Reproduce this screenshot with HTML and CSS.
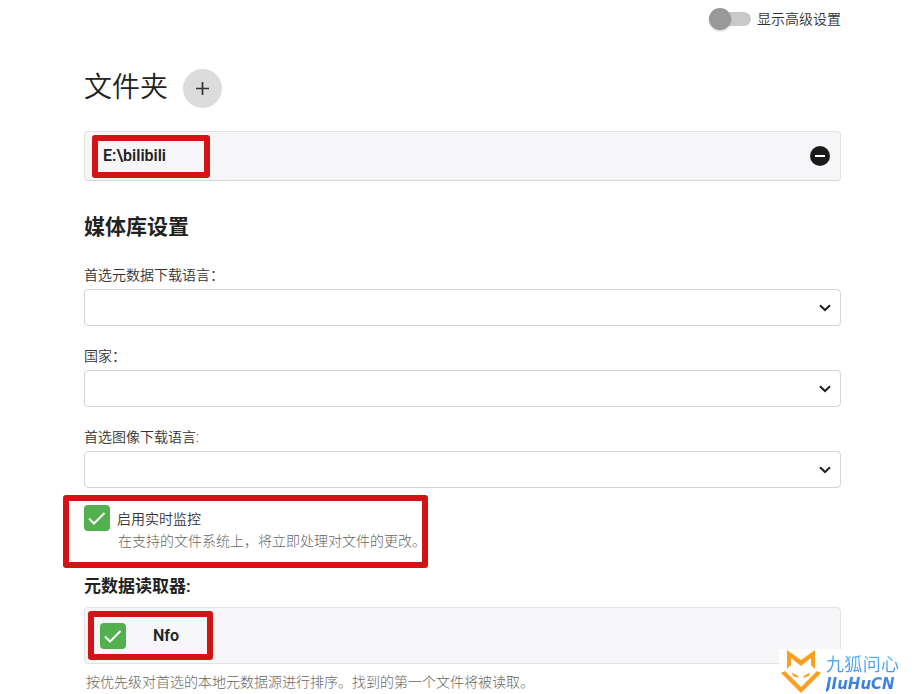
FILE: index.html
```
<!DOCTYPE html>
<html lang="zh-CN">
<head>
    <meta charset="UTF-8">
    <meta name="viewport" content="width=device-width, initial-scale=1.0">
    <title>媒体库设置</title>
    <link rel="stylesheet" href="styles.css">
</head>
<body>
    <form class="library-form">
        <label class="toggle">
            <input type="checkbox" class="toggle-input">
            <span class="toggle-track"></span>
            <span class="toggle-label">显示高级设置</span>
        </label>

        <div class="folder-header">
            <h1 class="folder-title">文件夹</h1>
            <button type="button" class="add-button" aria-label="+">
                <svg width="13" height="13" viewBox="0 0 13 13"><path d="M6.500 0V13M0 6.500H13" stroke="#333" stroke-width="1.700"/></svg>
            </button>
        </div>
        <div class="list-item folder-item">
            <span class="item-name">E:\bilibili</span>
            <button type="button" class="remove-button" aria-label="-">
                <svg width="20" height="20" viewBox="0 0 20 20"><circle cx="10" cy="10" r="10" fill="#1b1b1c"/><path d="M5 10H15" stroke="#fff" stroke-width="2"/></svg>
            </button>
            <span class="mark mark-folder"></span>
        </div>

        <h2 class="section-title">媒体库设置</h2>
        <div class="fields">
            <div class="field">
                <label for="language">首选元数据下载语言：</label>
                <div class="select-wrap">
                    <select id="language"><option></option></select>
                    <svg class="chevron" width="12" height="8" viewBox="0 0 12 8"><path d="M1 1.200L6 6L11 1.200" fill="none" stroke="#222" stroke-width="2"/></svg>
                </div>
            </div>
            <div class="field">
                <label for="country">国家：</label>
                <div class="select-wrap">
                    <select id="country"><option></option></select>
                    <svg class="chevron" width="12" height="8" viewBox="0 0 12 8"><path d="M1 1.200L6 6L11 1.200" fill="none" stroke="#222" stroke-width="2"/></svg>
                </div>
            </div>
            <div class="field">
                <label for="image-language">首选图像下载语言:</label>
                <div class="select-wrap">
                    <select id="image-language"><option></option></select>
                    <svg class="chevron" width="12" height="8" viewBox="0 0 12 8"><path d="M1 1.200L6 6L11 1.200" fill="none" stroke="#222" stroke-width="2"/></svg>
                </div>
            </div>
        </div>

        <div class="monitor">
            <span class="check">
                <input type="checkbox" id="monitor" checked>
                <svg class="tick" width="26" height="26" viewBox="0 0 26 26"><path d="M5 13.500L10 18.500L20.500 8" fill="none" stroke="#fff" stroke-width="2"/></svg>
            </span>
            <div class="monitor-text">
                <label for="monitor">启用实时监控</label>
                <p class="hint">在支持的文件系统上，将立即处理对文件的更改。</p>
            </div>
            <span class="mark mark-monitor"></span>
        </div>

        <h3 class="reader-title">元数据读取器:</h3>
        <div class="list-item reader-item">
            <span class="check">
                <input type="checkbox" id="nfo" checked>
                <svg class="tick" width="26" height="26" viewBox="0 0 26 26"><path d="M5 13.500L10 18.500L20.500 8" fill="none" stroke="#fff" stroke-width="2"/></svg>
            </span>
            <label for="nfo" class="item-name">Nfo</label>
            <span class="mark mark-reader"></span>
        </div>
        <p class="hint reader-hint">按优先级对首选的本地元数据源进行排序。找到的第一个文件将被读取。</p>
    </form>

    <div class="watermark">
        <svg width="40" height="44" viewBox="0 0 40 44">
            <g fill="#f9a01f">
                <path d="M6 1L20 11L34 1V20L30 16V9L20 17L10 9V16L6 20Z"/>
                <path d="M0 24L4 22L20 38L36 22L40 24L20 44Z"/>
                <path d="M11 23.500L18 27.500L16 28.500L12 27Z"/>
                <path d="M29 23.500L22 27.500L24 28.500L28 27Z"/>
            </g>
        </svg>
        <div class="watermark-text">
            <span class="watermark-name">
                <span>九</span><span>狐</span><span>问</span><span>心</span>
            </span>
            <span class="watermark-site">JIuHuCN</span>
        </div>
    </div>
</body>
</html>
```
FILE: styles.css
```
* {
    box-sizing: border-box;
}
body {
    margin: 0;
    background-color: #fff;
    color: #222;
    font-family: Roboto, "Noto Sans CJK SC", sans-serif;
    font-size: 14px;
    line-height: 20px;
}
h1, h2, h3, p {
    margin: 0;
}
button {
    border: 0;
    padding: 0;
    display: flex;
    align-items: center;
    justify-content: center;
    background: none;
    cursor: pointer;
}
label {
    color: #333;
    font-weight: 350;
}
.library-form {
    padding: 8px 74px 0 84px;
}
.toggle {
    display: flex;
    align-items: center;
    justify-content: flex-end;
    position: relative;
    height: 22px;
}
.toggle-input {
    position: absolute;
    opacity: 0;
}
.toggle-track {
    position: relative;
    width: 39px;
    height: 14px;
    margin-right: 6px;
    border-radius: 7px;
    background-color: #c9c9c9;
}
.toggle-track::before {
    content: "";
    position: absolute;
    left: -3px;
    top: -4px;
    width: 22px;
    height: 22px;
    border-radius: 50%;
    background-color: #999;
    box-shadow: 0 1px 2px rgba(0, 0, 0, 0.2);
}
.folder-header {
    display: flex;
    align-items: center;
    gap: 15px;
    margin-top: 38px;
}
.folder-title {
    font-size: 28px;
    line-height: 40px;
    font-weight: 350;
}
.add-button {
    width: 39px;
    height: 39px;
    border-radius: 50%;
    background-color: #dcdcdc;
}
.list-item {
    position: relative;
    display: flex;
    align-items: center;
    border: 1px solid #e2e2e4;
    border-radius: 4px;
    background-color: #f6f6f8;
}
.folder-item {
    justify-content: space-between;
    height: 50px;
    margin-top: 23px;
    padding: 0 10px 0 18px;
    border-bottom-color: #d6d6d8;
}
.item-name {
    color: #222;
    font-size: 16px;
    font-weight: 600;
}
.section-title {
    margin: 30px 0 22px;
    font-size: 21px;
    line-height: 32px;
    font-weight: 600;
}
.fields {
    display: flex;
    flex-direction: column;
    gap: 20px;
    margin-bottom: 17px;
}
.field label {
    display: block;
    margin-bottom: 4px;
}
.select-wrap {
    position: relative;
}
.select-wrap select {
    display: block;
    width: 100%;
    height: 37px;
    padding: 0 30px 0 10px;
    border: 1px solid #d4d4d4;
    border-radius: 4px;
    background-color: #fff;
    appearance: none;
    font: inherit;
}
.chevron {
    position: absolute;
    right: 10px;
    top: 15px;
    pointer-events: none;
}
.monitor {
    position: relative;
    display: flex;
    gap: 7px;
}
.check {
    position: relative;
    flex: none;
    width: 26px;
    height: 26px;
}
.check input {
    display: block;
    width: 26px;
    height: 26px;
    margin: 0;
    border-radius: 4px;
    background-color: #52b04f;
    appearance: none;
}
.tick {
    position: absolute;
    left: 0;
    top: 0;
    pointer-events: none;
}
.monitor-text {
    padding-top: 4px;
}
.monitor-text label {
    display: block;
}
.hint {
    color: #666;
    font-weight: 300;
    padding: 2px 0 0 1px;
}
.reader-title {
    margin: 24px 0 10px;
    font-size: 17px;
    line-height: 22px;
    font-weight: 600;
}
.reader-item {
    gap: 27px;
    height: 57px;
    padding: 0 15px;
}
.reader-hint {
    padding: 8px 0 0 2px;
}
/* red highlight frames */
.mark {
    position: absolute;
    border: 6px solid #d21414;
    border-radius: 3px;
    pointer-events: none;
}
.mark-folder {
    left: 7px;
    top: 3px;
    width: 118px;
    height: 43px;
}
.mark-monitor {
    left: -21px;
    top: -10px;
    width: 365px;
    height: 73px;
}
.mark-reader {
    left: 3px;
    top: 3px;
    width: 125px;
    height: 49px;
}
.watermark {
    position: fixed;
    right: 0;
    bottom: 0;
    display: flex;
    gap: 5px;
    width: 136px;
    height: 45px;
    padding-left: 2px;
    background-color: #fff;
}
.watermark-text {
    display: flex;
    flex-direction: column;
    width: 73px;
    color: transparent;
    background: linear-gradient(#5fc0f5, #2f6fe0);
    background-clip: text;
    -webkit-background-clip: text;
}
.watermark-name {
    display: flex;
    justify-content: space-between;
    height: 28px;
    font-size: 18px;
    line-height: 31px;
}
.watermark-site {
    font-family: "DejaVu Sans", sans-serif;
    font-size: 15px;
    line-height: 14px;
    font-weight: 700;
    font-style: italic;
}
```
